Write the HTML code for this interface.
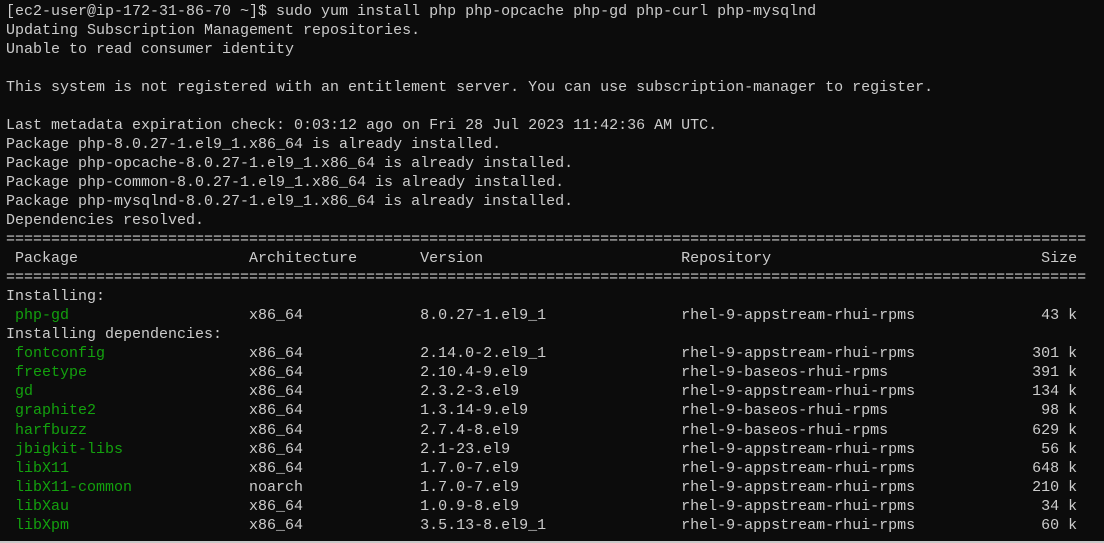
<!DOCTYPE html>
<html><head><style>
html,body{margin:0;padding:0;width:1104px;height:543px;overflow:hidden;background:#0c0c0c;}
pre{margin:0;position:absolute;left:6px;top:1.5px;font-family:"Liberation Mono","DejaVu Sans Mono",monospace;font-size:15px;line-height:19.05px;color:#cccccc;white-space:pre;}
.g{color:#13a10e}
span.p{display:inline-block;width:26ch}
span.a{display:inline-block;width:19ch}
span.v{display:inline-block;width:29ch}
span.r{display:inline-block;width:30ch}
span.s{display:inline-block;width:14ch;text-align:right}
.bar{position:absolute;left:0;right:0;bottom:0;height:2px;background:#c8c8c8}
</style></head><body>
<pre>[ec2-user@ip-172-31-86-70 ~]$ sudo yum install php php-opcache php-gd php-curl php-mysqlnd
Updating Subscription Management repositories.
Unable to read consumer identity

This system is not registered with an entitlement server. You can use subscription-manager to register.

Last metadata expiration check: 0:03:12 ago on Fri 28 Jul 2023 11:42:36 AM UTC.
Package php-8.0.27-1.el9_1.x86_64 is already installed.
Package php-opcache-8.0.27-1.el9_1.x86_64 is already installed.
Package php-common-8.0.27-1.el9_1.x86_64 is already installed.
Package php-mysqlnd-8.0.27-1.el9_1.x86_64 is already installed.
Dependencies resolved.
========================================================================================================================
 <span class="p">Package</span><span class="a">Architecture</span><span class="v">Version</span><span class="r">Repository</span><span class="s">Size</span>
========================================================================================================================
Installing:
 <span class="p g">php-gd</span><span class="a">x86_64</span><span class="v">8.0.27-1.el9_1</span><span class="r">rhel-9-appstream-rhui-rpms</span><span class="s">43 k</span>
Installing dependencies:
 <span class="p g">fontconfig</span><span class="a">x86_64</span><span class="v">2.14.0-2.el9_1</span><span class="r">rhel-9-appstream-rhui-rpms</span><span class="s">301 k</span>
 <span class="p g">freetype</span><span class="a">x86_64</span><span class="v">2.10.4-9.el9</span><span class="r">rhel-9-baseos-rhui-rpms</span><span class="s">391 k</span>
 <span class="p g">gd</span><span class="a">x86_64</span><span class="v">2.3.2-3.el9</span><span class="r">rhel-9-appstream-rhui-rpms</span><span class="s">134 k</span>
 <span class="p g">graphite2</span><span class="a">x86_64</span><span class="v">1.3.14-9.el9</span><span class="r">rhel-9-baseos-rhui-rpms</span><span class="s">98 k</span>
 <span class="p g">harfbuzz</span><span class="a">x86_64</span><span class="v">2.7.4-8.el9</span><span class="r">rhel-9-baseos-rhui-rpms</span><span class="s">629 k</span>
 <span class="p g">jbigkit-libs</span><span class="a">x86_64</span><span class="v">2.1-23.el9</span><span class="r">rhel-9-appstream-rhui-rpms</span><span class="s">56 k</span>
 <span class="p g">libX11</span><span class="a">x86_64</span><span class="v">1.7.0-7.el9</span><span class="r">rhel-9-appstream-rhui-rpms</span><span class="s">648 k</span>
 <span class="p g">libX11-common</span><span class="a">noarch</span><span class="v">1.7.0-7.el9</span><span class="r">rhel-9-appstream-rhui-rpms</span><span class="s">210 k</span>
 <span class="p g">libXau</span><span class="a">x86_64</span><span class="v">1.0.9-8.el9</span><span class="r">rhel-9-appstream-rhui-rpms</span><span class="s">34 k</span>
 <span class="p g">libXpm</span><span class="a">x86_64</span><span class="v">3.5.13-8.el9_1</span><span class="r">rhel-9-appstream-rhui-rpms</span><span class="s">60 k</span></pre>
<div class="bar"></div>
</body></html>
